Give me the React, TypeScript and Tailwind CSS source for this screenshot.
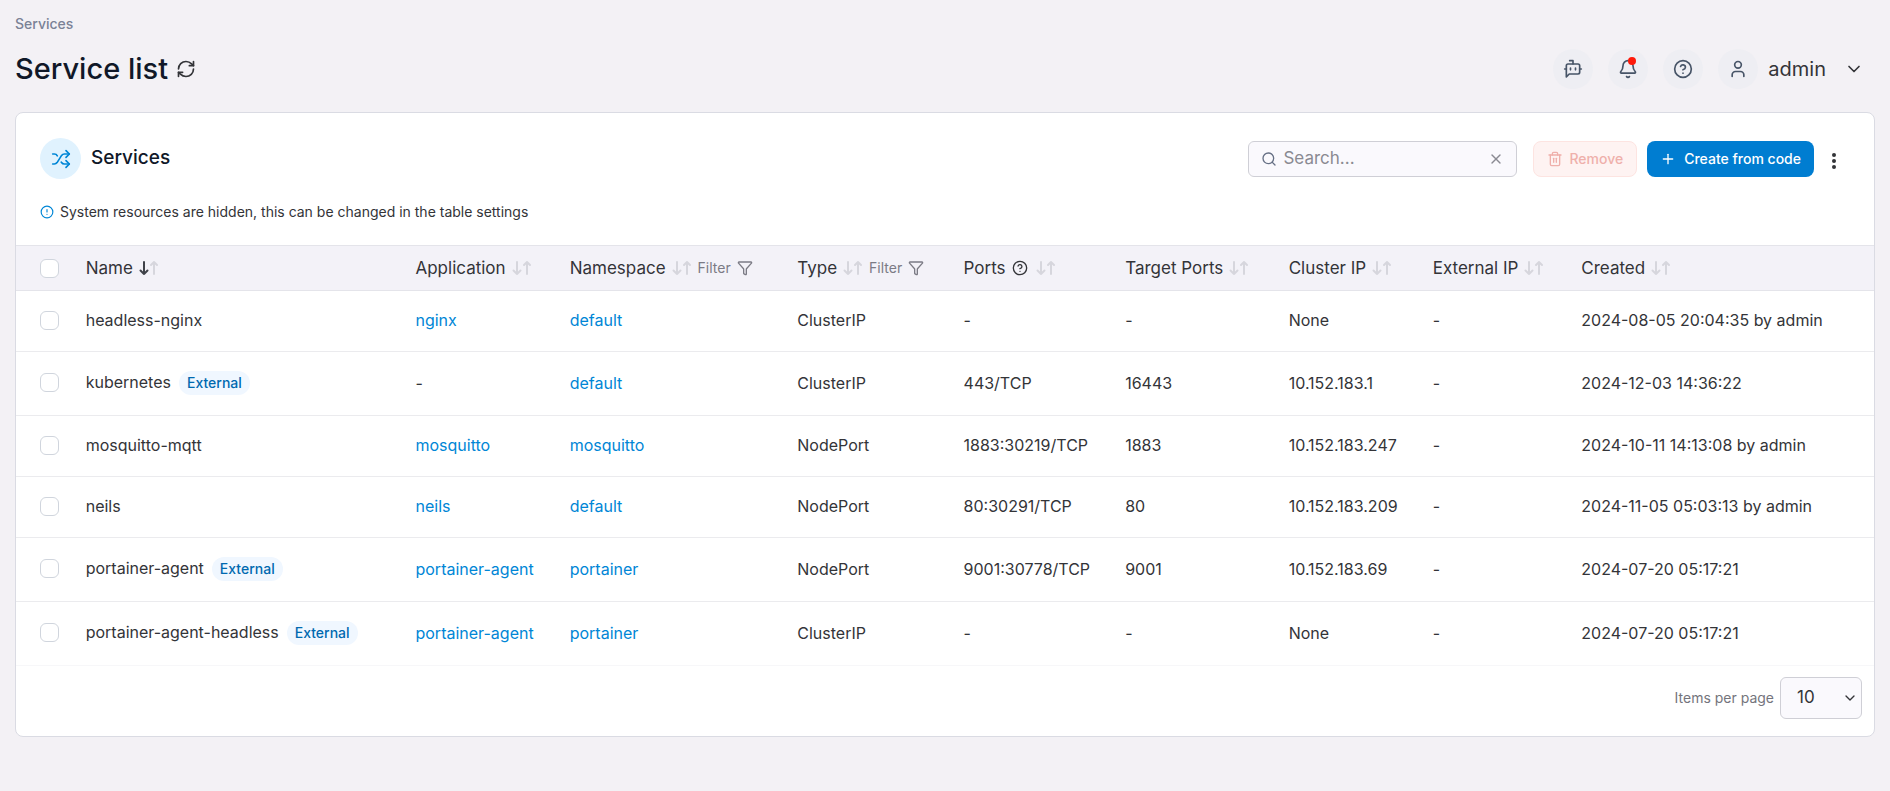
import React from "react";
import {
  AlertCircle,
  Bell,
  ChevronDown,
  Filter,
  HelpCircle,
  Plus,
  RefreshCw,
  Search,
  Shuffle,
  Trash2,
  User,
  X,
} from "lucide-react";

type Service = {
  name: string;
  external?: boolean;
  application?: string;
  namespace: string;
  type: string;
  ports: string;
  targetPorts: string;
  clusterIp: string;
  created: string;
};

const services: Service[] = [
  { name: "headless-nginx", application: "nginx", namespace: "default", type: "ClusterIP", ports: "-", targetPorts: "-", clusterIp: "None", created: "2024-08-05 20:04:35 by admin" },
  { name: "kubernetes", external: true, namespace: "default", type: "ClusterIP", ports: "443/TCP", targetPorts: "16443", clusterIp: "10.152.183.1", created: "2024-12-03 14:36:22" },
  { name: "mosquitto-mqtt", application: "mosquitto", namespace: "mosquitto", type: "NodePort", ports: "1883:30219/TCP", targetPorts: "1883", clusterIp: "10.152.183.247", created: "2024-10-11 14:13:08 by admin" },
  { name: "neils", application: "neils", namespace: "default", type: "NodePort", ports: "80:30291/TCP", targetPorts: "80", clusterIp: "10.152.183.209", created: "2024-11-05 05:03:13 by admin" },
  { name: "portainer-agent", external: true, application: "portainer-agent", namespace: "portainer", type: "NodePort", ports: "9001:30778/TCP", targetPorts: "9001", clusterIp: "10.152.183.69", created: "2024-07-20 05:17:21" },
  { name: "portainer-agent-headless", external: true, application: "portainer-agent", namespace: "portainer", type: "ClusterIP", ports: "-", targetPorts: "-", clusterIp: "None", created: "2024-07-20 05:17:21" },
];

function BotMessage() {
  return (
    <svg className="size-5" viewBox="0 0 24 24" fill="none" stroke="currentColor" strokeWidth="2" strokeLinecap="round" strokeLinejoin="round" aria-hidden="true">
      <path d="M12 6V2H8" />
      <path d="M4 21.5V8a2 2 0 0 1 2-2h12a2 2 0 0 1 2 2v8a2 2 0 0 1-2 2H7.5Z" />
      <path d="M2 12h2M9 11v2M15 11v2M20 12h2" />
    </svg>
  );
}

function RoundButton({ label, children }: { label: string; children: React.ReactNode }) {
  return (
    <button type="button" aria-label={label} className="relative flex size-10 items-center justify-center rounded-full bg-[#eeeef3] text-[#475467]">
      {children}
    </button>
  );
}

function SortArrows({ active = false }: { active?: boolean }) {
  return (
    <svg className="h-4 w-[22px] text-[#d6d6dd]" viewBox="0 0 22 16" fill="none" strokeWidth="2" strokeLinecap="round" strokeLinejoin="round" aria-hidden="true">
      <path className={active ? "stroke-[#3f4249]" : "stroke-current"} d="M7 2v12M3.5 10.5 7 14l3.5-3.5" />
      <path className="stroke-current" d="M17 14V2M14 5l3-3 3 3" />
    </svg>
  );
}

function HeaderCell({ label, width, active, filter, help }: { label: string; width: string; active?: boolean; filter?: boolean; help?: boolean }) {
  return (
    <th scope="col" className={`${width} p-0 text-left font-normal`}>
      <span className="flex items-center gap-1.5">
        <button type="button" className="flex items-center gap-1 whitespace-nowrap">
          {label}
          {help && <HelpCircle className="mx-0.5 size-4" aria-hidden="true" />}
          <SortArrows active={active} />
        </button>
        {filter && (
          <button type="button" className="flex items-center gap-1.5 text-sm text-[#7b7b85]">
            Filter
            <Filter className="size-4" aria-hidden="true" />
          </button>
        )}
      </span>
    </th>
  );
}

function Checkbox({ label }: { label: string }) {
  return (
    <input
      type="checkbox"
      aria-label={label}
      className="block size-[19px] appearance-none rounded-md border border-[#d0d5dd] bg-white checked:bg-[#0086c9]"
    />
  );
}

export default function App() {
  return (
    <div className="min-h-screen bg-[#f3f1f5] px-[15px] pt-4 pb-10 font-['Inter',sans-serif] text-[#333438]">
      <header>
        <nav aria-label="Breadcrumb" className="text-sm leading-4 font-medium text-[#7a8296]">
          Services
        </nav>
        <div className="mt-[17px] flex items-center justify-between pr-[11px]">
          <div className="flex items-center gap-2">
            <h1 className="text-[29px] leading-10 font-medium text-[#101828]">Service list</h1>
            <button type="button" aria-label="Refresh">
              <RefreshCw className="size-5" strokeWidth={2} aria-hidden="true" />
            </button>
          </div>
          <div className="flex items-center gap-[15px]">
            <RoundButton label="Assistant">
              <BotMessage />
            </RoundButton>
            <RoundButton label="Notifications">
              <Bell className="size-5" aria-hidden="true" />
              <span className="absolute top-2 right-3 size-2 rounded-full bg-[#ff1a0a]" />
            </RoundButton>
            <RoundButton label="Help">
              <HelpCircle className="size-5" aria-hidden="true" />
            </RoundButton>
            <button type="button" className="flex items-center text-xl leading-10">
              <span className="mr-2.5 flex size-10 items-center justify-center rounded-full bg-[#eeeef3] text-[#475467]">
                <User className="size-5" aria-hidden="true" />
              </span>
              admin
              <ChevronDown className="ml-[18px] size-5" aria-hidden="true" />
            </button>
          </div>
        </div>
      </header>

      <main className="mt-[23px] overflow-hidden rounded-lg border border-[#dadbe3] bg-white">
        <div className="flex items-center justify-between pt-[25px] pr-8 pl-6">
          <h2 className="flex items-center gap-2.5 text-[19px] font-medium text-[#101828]">
            <span className="flex size-[41px] items-center justify-center rounded-full bg-[#e0f2fe] text-[#0086d6]">
              <Shuffle className="size-5" aria-hidden="true" />
            </span>
            Services
          </h2>
          <div className="flex items-center">
            <div className="mr-4 flex h-9 w-[269px] items-center rounded-md border border-[#cfcfd6] bg-[#faf9fd] px-3">
              <Search className="size-4 text-[#667085]" aria-hidden="true" />
              <input type="text" aria-label="Search" placeholder="Search..." className="ml-1.5 min-w-0 flex-1 bg-transparent text-[17px] outline-none placeholder:text-[#8a8a92]" />
              <button type="button" aria-label="Clear search">
                <X className="size-4 text-[#8a8a92]" aria-hidden="true" />
              </button>
            </div>
            <button type="button" disabled className="mr-2.5 flex h-9 items-center gap-1.5 rounded-lg border border-[#fde4e1] bg-[#fef3f2] px-[13px] text-sm font-medium text-[#efb0ab]">
              <Trash2 className="size-4" aria-hidden="true" />
              Remove
            </button>
            <button type="button" className="flex h-9 items-center gap-2 rounded-lg bg-[#007dd1] px-[13px] text-sm font-medium text-white">
              <Plus className="size-4" aria-hidden="true" />
              Create from code
            </button>
            <button type="button" aria-label="Table settings" className="ml-3 flex h-9 w-4 items-center justify-center pt-1">
              <svg className="h-4 w-1" viewBox="0 0 4 16" fill="currentColor" aria-hidden="true">
                <circle cx="2" cy="2" r="2" />
                <circle cx="2" cy="8" r="2" />
                <circle cx="2" cy="14" r="2" />
              </svg>
            </button>
          </div>
        </div>
        <p className="my-[23px] flex items-center gap-1.5 pl-6 text-sm leading-5">
          <AlertCircle className="size-3.5 text-[#0086d6]" aria-hidden="true" />
          System resources are hidden, this can be changed in the table settings
        </p>

        <table className="w-full table-fixed border-collapse text-base leading-5">
          <thead>
            <tr className="h-[45px] border-y border-[#e4e4ea] bg-[#f3f2f8] text-[17px]">
              <th scope="col" className="w-[3.75%] p-0 pl-6 text-left">
                <Checkbox label="Select all services" />
              </th>
              <HeaderCell label="Name" width="w-[17.75%]" active />
              <HeaderCell label="Application" width="w-[8.3%]" />
              <HeaderCell label="Namespace" width="w-[12.25%]" filter />
              <HeaderCell label="Type" width="w-[8.95%]" filter />
              <HeaderCell label="Ports" width="w-[8.7%]" help />
              <HeaderCell label="Target Ports" width="w-[8.8%]" />
              <HeaderCell label="Cluster IP" width="w-[7.75%]" />
              <HeaderCell label="External IP" width="w-[8%]" />
              <HeaderCell label="Created" width="w-[15.75%]" />
            </tr>
          </thead>
          <tbody>
            {services.map((s) => (
              <tr key={s.name} className={`border-b border-[#ebebee] last:border-[#f7f7f9] *:p-0 *:pb-0.5 ${s.external ? "h-16" : "h-[61px]"}`}>
                <td>
                  <div className="pl-6">
                    <Checkbox label={`Select ${s.name}`} />
                  </div>
                </td>
                <td className="whitespace-nowrap">
                  {s.name}
                  {s.external && (
                    <span className="ml-2 inline-block rounded-full bg-[#f0f7ff] px-2 py-0.5 text-sm font-medium text-[#0069b0]">External</span>
                  )}
                </td>
                <td>{s.application ? <a href="#application" className="text-[#0086d6]">{s.application}</a> : "-"}</td>
                <td>
                  <a href="#namespace" className="text-[#0086d6]">{s.namespace}</a>
                </td>
                <td>{s.type}</td>
                <td>{s.ports}</td>
                <td>{s.targetPorts}</td>
                <td>{s.clusterIp}</td>
                <td>-</td>
                <td className="whitespace-nowrap">{s.created}</td>
              </tr>
            ))}
          </tbody>
        </table>

        <footer className="flex items-center justify-end gap-1.5 pt-[11px] pr-3 pb-[17px]">
          <label htmlFor="page-size" className="text-sm text-[#74747c]">
            Items per page
          </label>
          <span className="relative flex items-center">
            <select id="page-size" defaultValue="10" className="h-[42px] w-[82px] appearance-none rounded-md border border-[#cfcfd6] bg-[#faf9fd] pl-4 text-[17px]">
              <option>10</option>
              <option>25</option>
              <option>50</option>
              <option>100</option>
            </select>
            <ChevronDown className="pointer-events-none absolute right-1 size-4" aria-hidden="true" />
          </span>
        </footer>
      </main>
    </div>
  );
}
